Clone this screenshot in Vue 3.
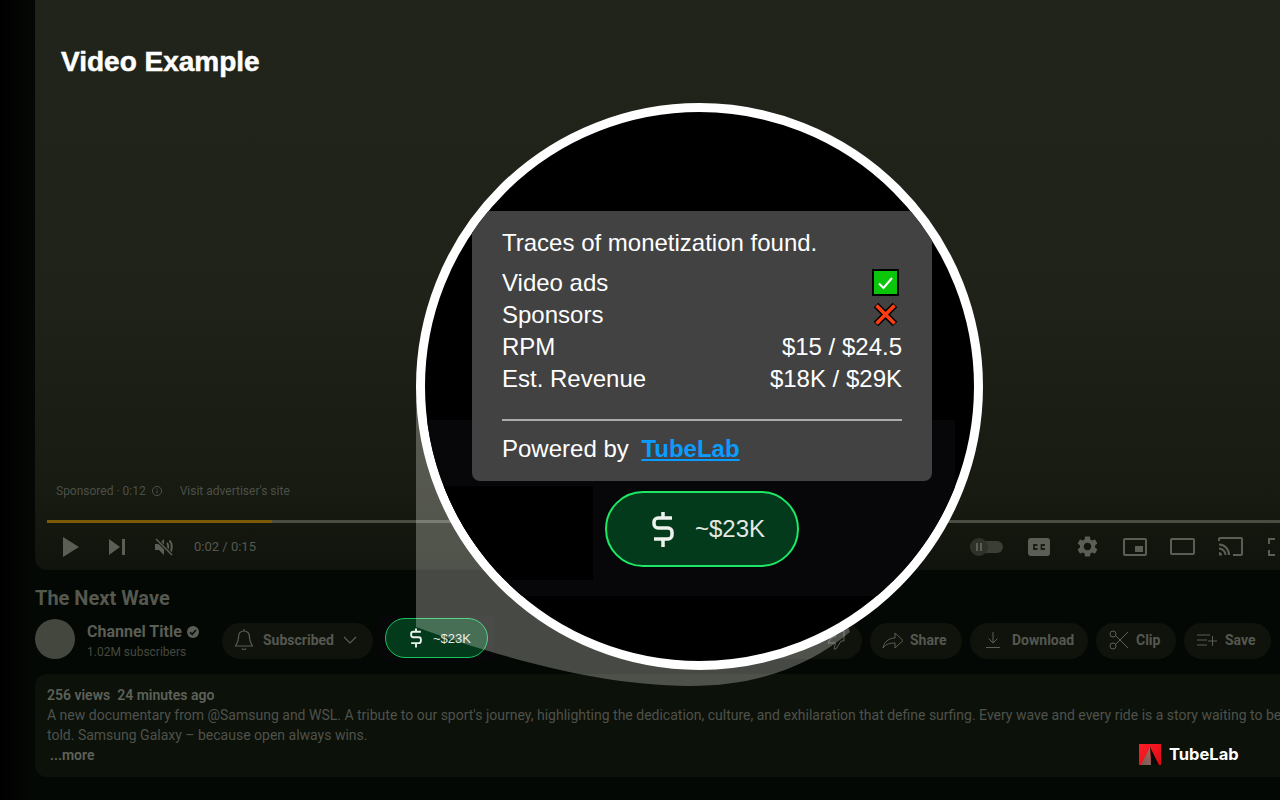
<script setup>
const stats = [
  { label: "RPM", value: "$15 / $24.5" },
  { label: "Est. Revenue", value: "$18K / $29K" },
];
</script>

<template>
  <div class="page">
    <!-- player -->
    <section class="video">
      <h2 class="video-label">Video Example</h2>
      <div class="ad-line">
        <span>Sponsored · 0:12</span>
        <svg class="info" viewBox="0 0 12 12" width="12" height="12">
          <circle cx="6" cy="6" r="4.6" fill="none" stroke="#4d5047" />
          <path d="M6 5.4v3M6 3.4v1" stroke="#4d5047" />
        </svg>
        <span class="visit">Visit advertiser's site</span>
      </div>
      <div class="track"><div class="progress"></div></div>
      <div class="controls">
        <svg class="ctl play" viewBox="0 0 16 20" width="16" height="20"><path d="M0 0 16 10 0 20z" /></svg>
        <svg class="ctl next" viewBox="0 0 16 16" width="16" height="16"><path d="M0 0 11 8 0 16zM13 0h3v16h-3z" /></svg>
        <svg class="ctl mute" viewBox="0 0 20 20" width="20" height="20">
          <path d="M1 7h4l5-5v16l-5-5H1z" />
          <path d="M13 6c1.6 1.6 1.6 6 0 8M15.500 3.500c3 3 3 10 0 13" fill="none" stroke="#5b5e54" stroke-width="2" />
          <path d="M1.500 1.500l17 17" stroke="#14180f" stroke-width="3.500" />
          <path d="M2 2l16 16" stroke="#5b5e54" stroke-width="1.600" />
        </svg>
        <span class="time">0:02 / 0:15</span>

        <div class="ctl-right">
          <div class="toggle"><span class="knob"><i></i><i></i></span></div>
          <svg class="cc" viewBox="0 0 22 18" width="22" height="18">
            <rect width="22" height="18" rx="3" fill="#5b5e54" />
            <path d="M9.500 7H6v4h3.500M17 7h-3.500v4H17" fill="none" stroke="#1a1e14" stroke-width="1.800" />
          </svg>
          <svg class="gear" viewBox="2 2 20 20" width="21" height="21">
            <path fill="#5b5e54" d="M19.140 12.940c.04-.3.06-.61.06-.94 0-.32-.02-.64-.07-.94l2.030-1.580c.18-.14.23-.41.12-.61l-1.920-3.320c-.12-.22-.37-.29-.59-.22l-2.390.96c-.5-.38-1.030-.7-1.620-.94l-.36-2.540c-.04-.24-.24-.41-.48-.41h-3.840c-.24 0-.43.17-.47.41l-.36 2.540c-.59.24-1.130.57-1.620.94l-2.390-.96c-.22-.08-.47 0-.59.22L2.740 8.870c-.12.21-.08.47.12.61l2.030 1.580c-.05.3-.09.63-.09.94s.02.64.07.94l-2.030 1.580c-.18.14-.23.41-.12.61l1.920 3.320c.12.22.37.29.59.22l2.390-.96c.5.38 1.030.7 1.620.94l.36 2.540c.05.24.24.41.48.41h3.840c.24 0 .44-.17.47-.41l.36-2.540c.59-.24 1.130-.56 1.620-.94l2.390.96c.22.08.47 0 .59-.22l1.920-3.320c.12-.22.07-.47-.12-.61l-2.010-1.580zM12 15.600c-1.980 0-3.600-1.620-3.600-3.600s1.620-3.600 3.600-3.600 3.600 1.620 3.600 3.600-1.620 3.600-3.600 3.600z" />
          </svg>
          <svg class="mini" viewBox="0 0 24 18" width="24" height="18">
            <rect x="1" y="1" width="22" height="16" rx="1" fill="none" stroke="#5b5e54" stroke-width="2" />
            <rect x="12" y="8" width="8" height="6" fill="#5b5e54" />
          </svg>
          <svg class="theater" viewBox="0 0 25 17" width="25" height="17">
            <rect x="1" y="1" width="23" height="15" rx="1" fill="none" stroke="#5b5e54" stroke-width="2" />
          </svg>
          <svg class="cast" viewBox="0 0 25 19" width="25" height="19">
            <path d="M1 4V2a1 1 0 0 1 1-1h21a1 1 0 0 1 1 1v15a1 1 0 0 1-1 1h-8" fill="none" stroke="#5b5e54" stroke-width="2" />
            <path d="M1 7.500c5.500 0 10 4.500 10 10.500M1 11.500c3.500 0 6.500 3 6.500 6.500" fill="none" stroke="#5b5e54" stroke-width="2" />
            <path d="M1 15a3 3 0 0 1 3 3.500H1z" fill="#5b5e54" />
          </svg>
          <svg class="full" viewBox="0 0 22 18" width="22" height="18">
            <path d="M1 6V1h6M1 12v5h6M21 6V1h-6M21 12v5h-6" fill="none" stroke="#5b5e54" stroke-width="2" />
          </svg>
        </div>
      </div>
    </section>

    <h1 class="title">The Next Wave</h1>

    <!-- channel + actions -->
    <div class="meta">
      <div class="channel">
        <div class="avatar"></div>
        <div class="channel-text">
          <div class="channel-name">
            Channel Title
            <svg viewBox="0 0 14 14" width="14" height="14">
              <circle cx="7" cy="7" r="6" fill="#5b5e54" />
              <path d="M4 7.200 6.200 9.300 10 5" fill="none" stroke="#070a06" stroke-width="1.500" />
            </svg>
          </div>
          <div class="subs">1.02M subscribers</div>
        </div>
      </div>

      <button class="chip subscribed">
        <svg viewBox="0 0 20 24" width="20" height="24" fill="none" stroke="#5b5e54" stroke-width="1.200">
          <path d="M10 3c-4 0-5.500 3-5.500 6.500 0 4-1.500 6-3 8.500h17c-1.500-2.500-3-4.500-3-8.500C15.500 6 14 3 10 3zM10 1v2M8 20.500c.5 1.300 3.500 1.300 4 0" />
        </svg>
        <span>Subscribed</span>
        <svg viewBox="0 0 14 8" width="14" height="8" fill="none" stroke="#5b5e54" stroke-width="1.200"><path d="M1 1l6 6 6-6" /></svg>
      </button>

      <div class="rev-wrap">
        <div class="rev-small">
          <svg viewBox="0 0 22 37" width="12" height="20" fill="none" stroke="#eef2ee" stroke-width="3.500">
            <path d="M20 7H6a4 4 0 0 0-4 4v2a4 4 0 0 0 4 4h10a4 4 0 0 1 4 4v3a4 4 0 0 1-4 4H2M11 1v6M11 28v8" />
          </svg>
          <span>~$23K</span>
        </div>
      </div>

      <div class="chip like">
        <svg viewBox="0 0 20 20" width="20" height="20" fill="none" stroke="#5b5e54" stroke-width="1">
          <path d="M19 1v10h-3l-5 8h-2l1.500-6H3l3-5 5-2V1z" />
        </svg>
      </div>
      <button class="chip share">
        <svg viewBox="0 0 22 20" width="22" height="20" fill="none" stroke="#5b5e54" stroke-width="1">
          <path d="M1 18c1-6 6-10 12-10V3l8 7.500-8 7.500v-5c-5 0-9 1-12 5z" />
        </svg>
        <span>Share</span>
      </button>
      <button class="chip download">
        <svg viewBox="0 0 16 18" width="16" height="18" fill="none" stroke="#5b5e54" stroke-width="1">
          <path d="M8 1v11M3.500 7.500 8 12l4.500-4.500M1 16.500h14" />
        </svg>
        <span>Download</span>
      </button>
      <button class="chip clip">
        <svg viewBox="0 0 20 20" width="20" height="20" fill="none" stroke="#5b5e54" stroke-width="1">
          <circle cx="4" cy="4" r="3" /><circle cx="4" cy="16" r="3" />
          <path d="M6.500 5.500 19 18M6.500 14.500 19 2" />
        </svg>
        <span>Clip</span>
      </button>
      <button class="chip save">
        <svg viewBox="0 0 22 14" width="22" height="14" fill="none" stroke="#5b5e54" stroke-width="1">
          <path d="M1 2h13M1 7h10M1 12h10M16.500 3v10M12 8h9" />
        </svg>
        <span>Save</span>
      </button>
    </div>

    <!-- description -->
    <div class="desc">
      <div class="desc-head">256 views&nbsp; 24 minutes ago</div>
      <div class="desc-line">A new documentary from @Samsung and WSL. A tribute to our sport's journey, highlighting the dedication, culture, and exhilaration that define surfing. Every wave and every ride is a story waiting to be</div>
      <div class="desc-line">told. Samsung Galaxy – because open always wins.</div>
      <div class="desc-more">...more</div>
    </div>

    <!-- beam from the small pill up to the lens -->
    <svg class="beam" viewBox="0 0 1280 800" width="1280" height="800">
      <path d="M416 400V627C480 650 590 686 690 686C760 686 810 665 850 632L800 500H500Z" fill="#fffff5" fill-opacity=".27" />
    </svg>

    <!-- magnifier -->
    <div class="lens">
      <div class="lens-shade"></div>
      <div class="lens-block"></div>
      <div class="tooltip">
        <div class="tip-title">Traces of monetization found.</div>
        <div class="tip-row">
          <span>Video ads</span>
          <svg class="tip-icon" viewBox="0 0 27 27" width="27" height="27">
            <rect x="1" y="1" width="25" height="25" fill="#0cc60c" stroke="#000" stroke-width="2" />
            <path d="M7 14.500l4.500 4.500L20 9" fill="none" stroke="#fff" stroke-width="2" />
          </svg>
        </div>
        <div class="tip-row">
          <span>Sponsors</span>
          <svg class="tip-icon" viewBox="0 0 27 27" width="27" height="27">
            <path d="M4 4l19 19M23 4 4 23" stroke="#000" stroke-width="6.500" />
            <path d="M4.500 4.500l18 18M22.500 4.500l-18 18" stroke="#ff3d10" stroke-width="3.500" />
          </svg>
        </div>
        <div v-for="s in stats" :key="s.label" class="tip-row">
          <span>{{ s.label }}</span>
          <span>{{ s.value }}</span>
        </div>
        <div class="tip-rule"></div>
        <div class="tip-foot">Powered by <a href="#" class="tip-link">TubeLab</a></div>
      </div>
      <div class="rev-big">
        <svg viewBox="0 0 22 37" width="22" height="37" fill="none" stroke="#eef2ee" stroke-width="3.500">
          <path d="M20 7H6a4 4 0 0 0-4 4v2a4 4 0 0 0 4 4h10a4 4 0 0 1 4 4v3a4 4 0 0 1-4 4H2M11 1v6M11 28v8" />
        </svg>
        <span>~$23K</span>
      </div>
    </div>

    <!-- watermark -->
    <div class="brand">
      <svg viewBox="0 0 22 21" width="22" height="21">
        <defs>
          <linearGradient id="brandRed" x1="0" y1="0" x2="1" y2="1">
            <stop offset="0" stop-color="#ff2028" />
            <stop offset="1" stop-color="#e00814" />
          </linearGradient>
          <linearGradient id="brandFold" x1="1" y1="0" x2="0" y2="1">
            <stop offset="0" stop-color="#a8685c" />
            <stop offset="1" stop-color="#6e5c55" />
          </linearGradient>
        </defs>
        <rect width="22" height="21" fill="url(#brandRed)" />
        <path d="M11 3 20 21H12z" fill="#070a06" />
        <path d="M11 3 2 21H12z" fill="url(#brandFold)" />
      </svg>
      <span>TubeLab</span>
    </div>
  </div>
</template>

<style scoped>
.page {
  position: relative;
  width: 1280px;
  height: 800px;
  overflow: hidden;
  background: linear-gradient(90deg, #000 0, #040804 35px);
  font-family: Roboto, "Liberation Sans", sans-serif;
}

/* player */
.video {
  box-sizing: border-box;
  height: 570px;
  margin-left: 35px;
  padding: 45px 0 0 12px;
  display: flex;
  flex-direction: column;
  border-bottom-left-radius: 12px;
  background: linear-gradient(180deg, #20241a 0, #1e2219 300px, #161a11 500px, #0f130b 570px);
}
.video-label {
  margin: 0 0 0 14px;
  font: 700 28px/34px "Liberation Sans", Arial, sans-serif;
  -webkit-text-stroke: 0.5px #fff;
  color: #fff;
}
.ad-line {
  margin: auto 0 0 9px;
  display: flex;
  align-items: center;
  gap: 5px;
  font-size: 12px;
  line-height: 18px;
  color: #4d5047;
}
.visit { margin-left: 12px; }
.track {
  margin-top: 20px;
  height: 3px;
  background: #4a4d42;
}
.progress {
  width: 225px;
  height: 100%;
  background: #7a5a08;
}
.controls {
  height: 47px;
  display: flex;
  align-items: center;
  fill: #5b5e54;
}
.ctl { flex: none; }
.play { margin-left: 16px; }
.next { margin-left: 30px; }
.mute { margin-left: 29px; }
.time {
  margin-left: 20px;
  font-size: 13px;
  color: #565950;
}
.ctl-right {
  margin-left: auto;
  margin-right: -10px;
  display: flex;
  align-items: center;
}
.toggle {
  position: relative;
  width: 33px;
  height: 12px;
  border-radius: 6px;
  background: #3b3e35;
}
.knob {
  position: absolute;
  left: 0;
  top: -3px;
  width: 18px;
  height: 18px;
  border-radius: 50%;
  background: #2f3229;
  display: flex;
  align-items: center;
  justify-content: center;
  gap: 2px;
}
.knob i {
  width: 2px;
  height: 8px;
  background: #5b5e54;
}
.cc { margin-left: 25px; }
.gear { margin-left: 27px; }
.mini { margin-left: 25px; }
.theater { margin-left: 23px; }
.cast { margin-left: 23px; }
.full { margin-left: 25px; }

.title {
  margin: 14px 0 0 35px;
  font-size: 20px;
  line-height: 28px;
  font-weight: 700;
  color: #55584f;
}

/* channel row */
.meta {
  width: 1236px;
  height: 40px;
  margin: 7px 0 0 35px;
  display: flex;
  align-items: flex-start;
}
.channel {
  width: 187px;
  flex: none;
  display: flex;
  gap: 12px;
}
.avatar {
  width: 40px;
  height: 40px;
  border-radius: 50%;
  background: #44473e;
}
.channel-text { padding-top: 2px; }
.channel-name {
  display: flex;
  align-items: center;
  gap: 4px;
  font-size: 16px;
  line-height: 22px;
  font-weight: 700;
  color: #5a5d55;
}
.subs {
  font-size: 12px;
  line-height: 18px;
  color: #45483f;
}
.chip {
  box-sizing: border-box;
  height: 36px;
  margin-top: 4px;
  padding: 0 0 2px;
  border: 0;
  border-radius: 18px;
  background: #0f130c;
  display: flex;
  align-items: center;
  font: 700 14px Roboto, "Liberation Sans", sans-serif;
  color: #55584f;
}
.subscribed {
  width: 151px;
  padding-left: 12px;
  gap: 9px;
}
.rev-wrap {
  margin: -4px 0 -2px 6px;
  padding: 3px 6px;
  background: #07070a;
}
.rev-small {
  box-sizing: border-box;
  width: 103px;
  height: 40px;
  border: 1.500px solid #17c45c;
  border-radius: 20px;
  background: #033a1b;
  display: flex;
  align-items: center;
  padding-left: 24px;
  gap: 11px;
  font: 13px "Liberation Sans", Arial, sans-serif;
  color: #e4e8e4;
}
.like {
  width: 170px;
  margin-left: auto;
  justify-content: flex-end;
  padding-right: 17px;
}
.share { width: 92px; margin-left: 8px; padding-left: 12px; gap: 6px; }
.download { width: 118px; margin-left: 8px; padding-left: 15px; gap: 11px; }
.clip { width: 80px; margin-left: 8px; padding-left: 13px; gap: 7px; }
.save { width: 87px; margin-left: 8px; padding-left: 12px; gap: 7px; }

/* description */
.desc {
  box-sizing: border-box;
  width: 1400px;
  height: 103px;
  margin: 15px 0 0 35px;
  padding: 11px 12px;
  border-radius: 12px;
  background: #0c110a;
  font-size: 14px;
  line-height: 20px;
  white-space: nowrap;
  color: #4f524a;
}
.desc-head {
  font-weight: 600;
  color: #5e6158;
}
.desc-more {
  margin-left: 3px;
  font-weight: 600;
  color: #5e6158;
}

.beam {
  position: absolute;
  left: 0;
  top: 0;
  pointer-events: none;
}

/* magnifier */
.lens {
  position: absolute;
  left: 416px;
  top: 103px;
  box-sizing: border-box;
  width: 567px;
  height: 567px;
  padding: 99px 0 0 5px;
  border: 9px solid #fff;
  border-radius: 50%;
  overflow: hidden;
  background: #000;
  display: flex;
  flex-direction: column;
  align-items: center;
  font-family: "Liberation Sans", Arial, sans-serif;
}
.lens-shade {
  position: absolute;
  left: 0;
  top: 308px;
  width: 530px;
  height: 176px;
  background: #07070a;
}
.lens-block {
  position: absolute;
  left: 0;
  top: 374px;
  width: 168px;
  height: 94px;
  background: #000;
}
.tooltip {
  position: relative;
  box-sizing: border-box;
  width: 460px;
  height: 270px;
  flex: none;
  padding: 16px 30px;
  border-radius: 8px;
  background: #424242;
  font-size: 24px;
  line-height: 32px;
  color: #fff;
}
.tip-title { margin-bottom: 8px; }
.tip-row {
  height: 32px;
  display: flex;
  justify-content: space-between;
  align-items: center;
}
.tip-icon { margin: -2px 3px 0 0; }
.tip-rule {
  height: 2px;
  margin: 24px 0 12px;
  background: #ababab;
}
.tip-link {
  margin-left: 6px;
  font-weight: 700;
  color: #0a9dff;
}
.rev-big {
  position: relative;
  box-sizing: border-box;
  width: 194px;
  height: 76px;
  flex: none;
  margin-top: 10px;
  padding-left: 45px;
  border: 2.500px solid #1de764;
  border-radius: 38px;
  background: #033a1b;
  display: flex;
  align-items: center;
  gap: 21px;
  font-size: 24px;
  color: #e4e8e4;
}

/* watermark */
.brand {
  position: absolute;
  left: 1139px;
  top: 744px;
  display: flex;
  align-items: center;
  gap: 8px;
  font: 700 16.5px/21px Inter, "Liberation Sans", sans-serif;
  color: #fff;
}
</style>

<style>
html, body {
  margin: 0;
  background: #040804;
}
</style>
